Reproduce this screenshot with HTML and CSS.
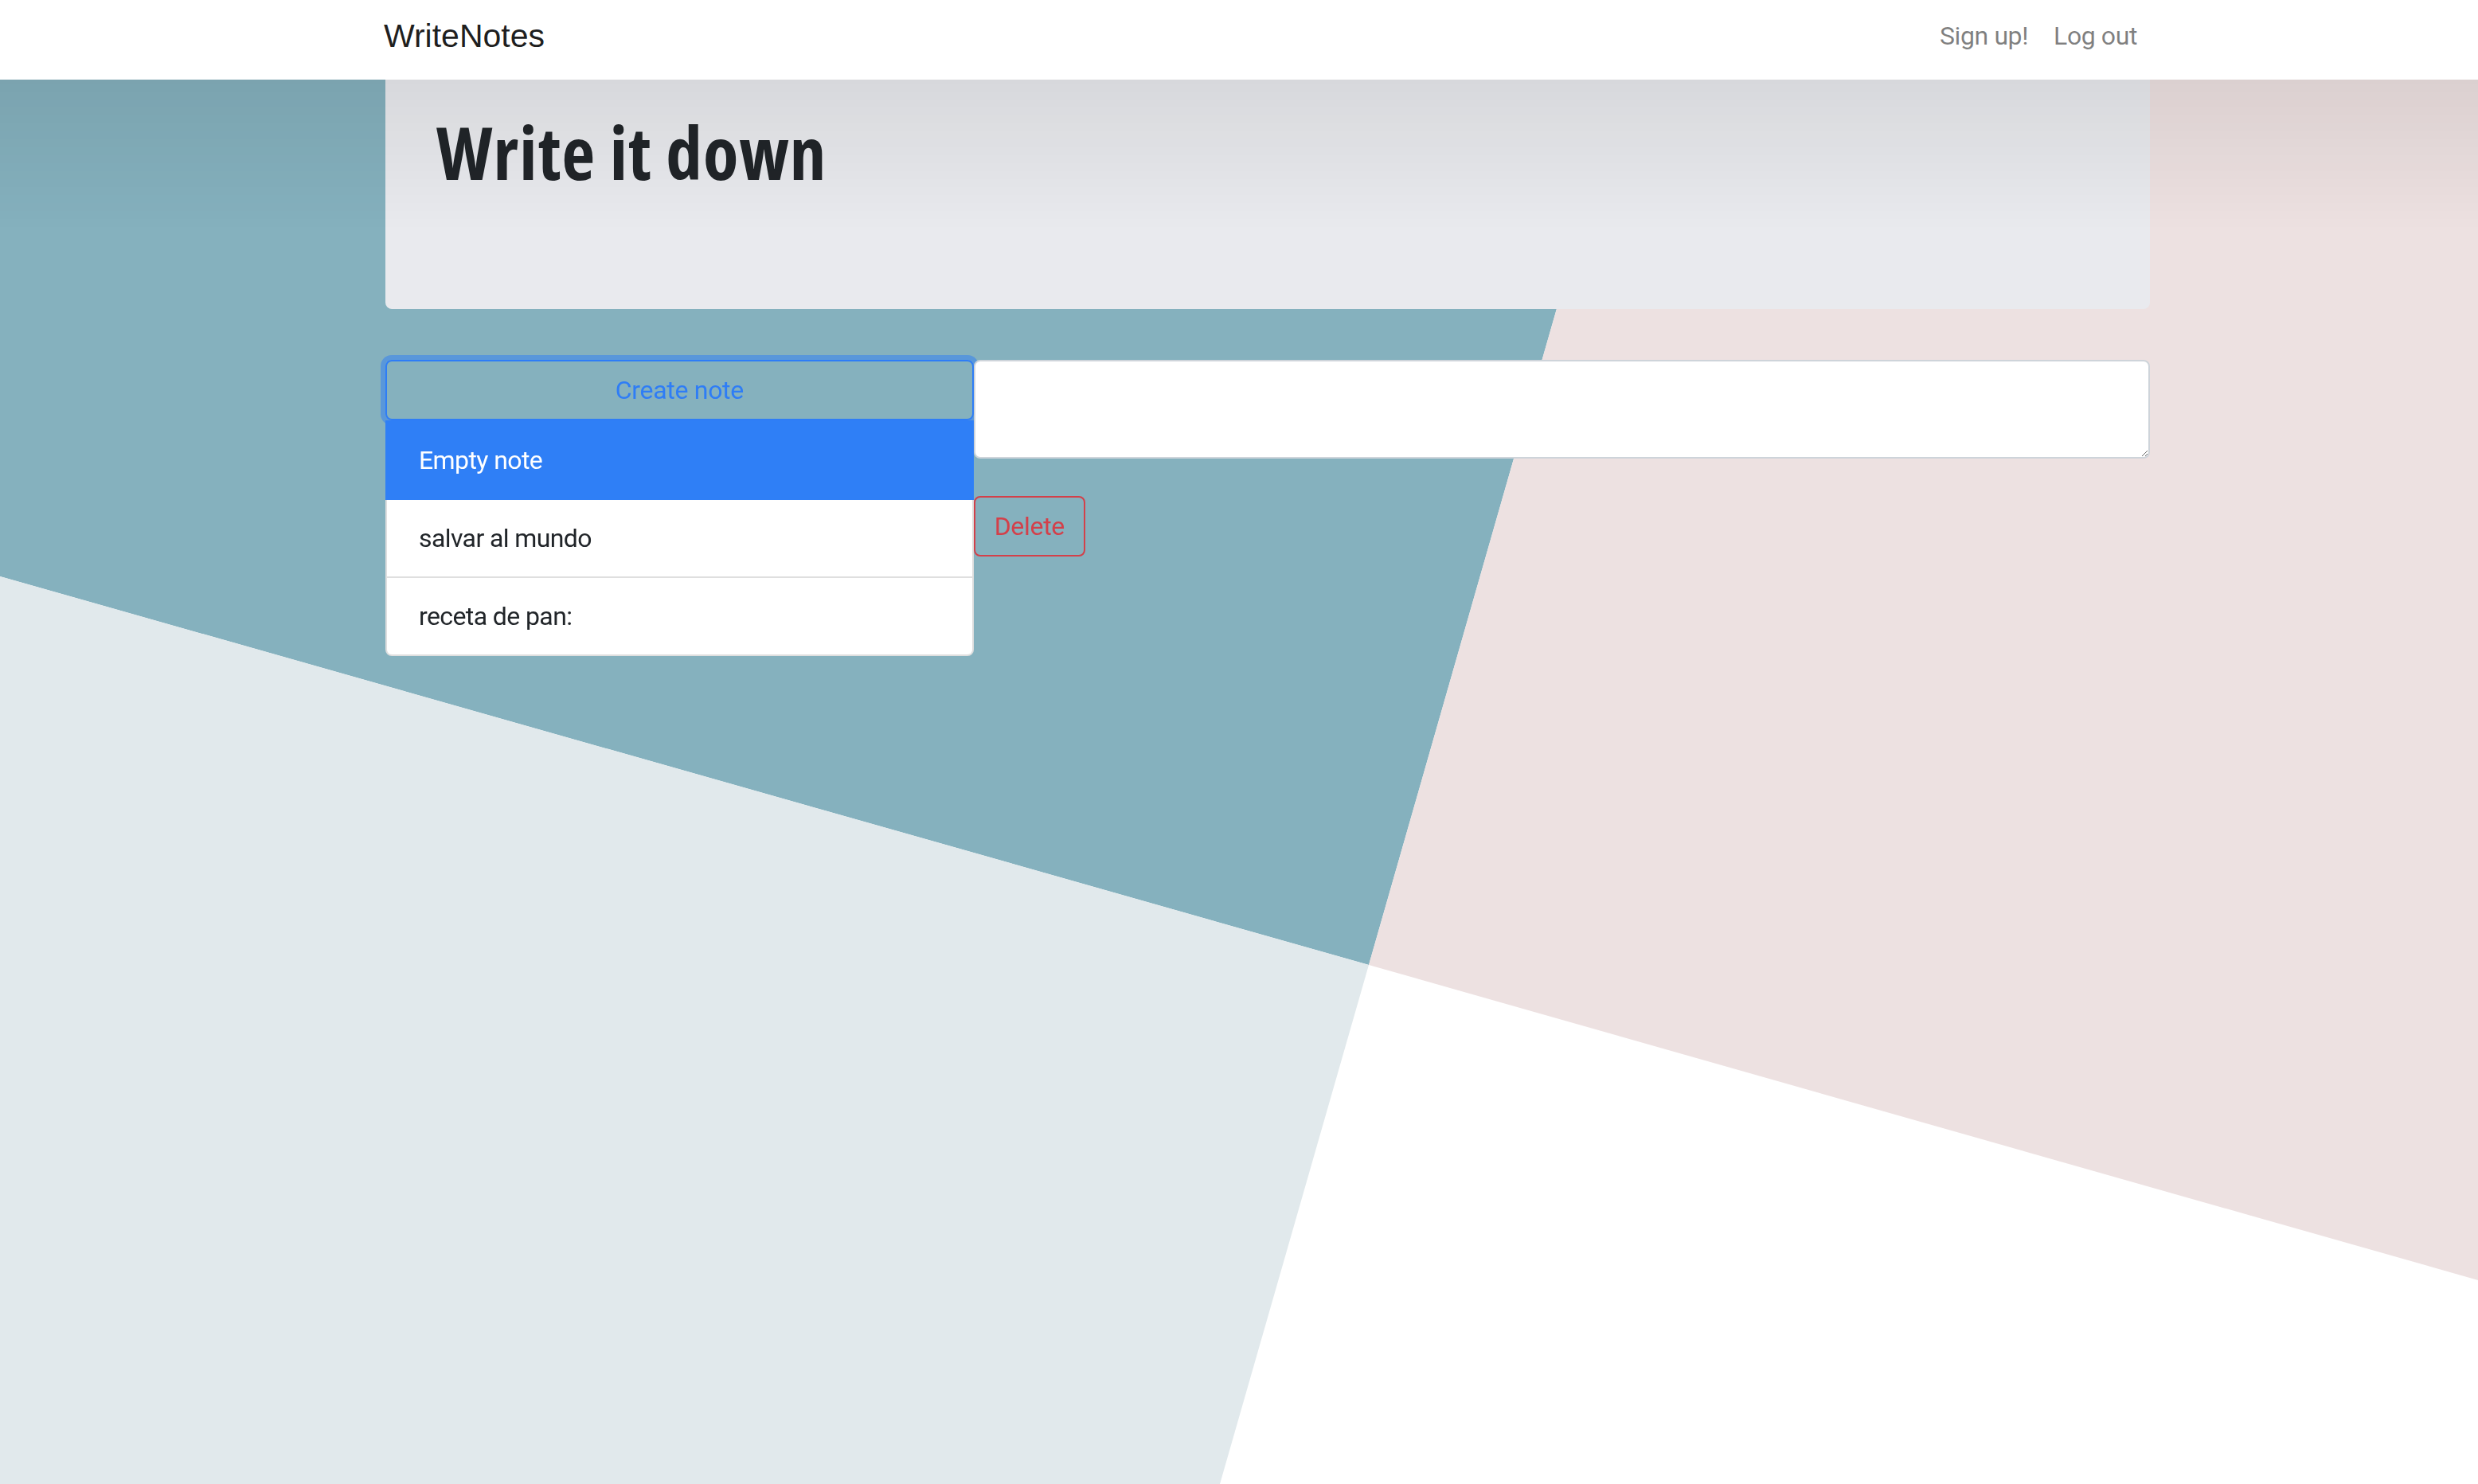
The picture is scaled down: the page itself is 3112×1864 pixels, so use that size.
FILE: index.html
```html
<!DOCTYPE html>
<html lang="en">
<head>
<meta charset="utf-8">
<title>WriteNotes</title>
<link rel="stylesheet" href="styles.css">
</head>
<body>
<svg class="bg" viewBox="0 0 3112 1864" preserveAspectRatio="none" aria-hidden="true">
  <rect width="3112" height="1864" fill="#ffffff"/>
  <polygon points="0,0 2066,0 1719,1212 0,724" fill="#85b1be"/>
  <polygon points="2066,0 3112,0 3112,1608 1719,1212" fill="#ede1e1"/>
  <polygon points="0,724 1719,1212 1532,1864 0,1864" fill="#e1e9ec"/>
</svg>
<header class="navbar">
  <div class="container nav-inner">
    <a class="brand" href="#">WriteNotes</a>
    <nav class="nav-links">
      <a class="nav-link" href="#">Sign up!</a>
      <a class="nav-link" href="#">Log out</a>
    </nav>
  </div>
</header>
<main class="container page">
  <section class="jumbotron">
    <h1 class="title">Write it down</h1>
  </section>
  <div class="notes-row">
    <div class="notes-col">
      <button class="btn btn-primary-outline btn-block focused">Create note</button>
      <ul class="list-group">
        <li class="list-item active">Empty note</li>
        <li class="list-item">salvar al mundo</li>
        <li class="list-item">receta de pan:</li>
      </ul>
    </div>
    <div class="editor-col">
      <textarea class="note-text" rows="2"></textarea>
      <button class="btn btn-danger-outline">Delete</button>
    </div>
  </div>
</main>
</body>
</html>
```
FILE: styles.css
```css
* { box-sizing: border-box; }

html, body {
  margin: 0;
  padding: 0;
}

body {
  font-family: Roboto, "Liberation Sans", sans-serif;
  font-size: 32px;
  line-height: 48px;
  letter-spacing: -0.4px;
  color: #212529;
  min-height: 1864px;
}

.bg {
  position: fixed;
  top: 0;
  left: 0;
  width: 100%;
  height: 100%;
  z-index: 0;
}

.container {
  width: 2216px;
  margin-left: 484px;
}

.navbar {
  position: relative;
  z-index: 2;
  height: 100px;
  background: #ffffff;
}

.navbar::after {
  content: "";
  position: absolute;
  left: 0;
  right: 0;
  top: 100%;
  height: 190px;
  background: linear-gradient(rgba(0, 0, 0, 0.075), rgba(0, 0, 0, 0));
  pointer-events: none;
}

.nav-inner {
  height: 100%;
  display: flex;
  align-items: center;
  justify-content: space-between;
}

.brand {
  font-family: "Liberation Sans", Arial, sans-serif;
  font-size: 41px;
  line-height: 60px;
  letter-spacing: 0;
  color: rgba(0, 0, 0, 0.9);
  text-decoration: none;
  margin-left: -2px;
  margin-top: -10px;
}

.nav-links {
  display: flex;
  margin-top: -10px;
}

.nav-link {
  padding: 0 16px;
  font-size: 32px;
  line-height: 48px;
  letter-spacing: -0.4px;
  color: rgba(0, 0, 0, 0.5);
  text-decoration: none;
}

.page {
  position: relative;
  z-index: 1;
}

.jumbotron {
  height: 288px;
  background: #e9eaee;
  border-radius: 0 0 8px 8px;
  padding: 31px 64px 0;
}

.title {
  margin: 0;
  font-family: "Open Sans", "DejaVu Sans", sans-serif;
  font-weight: 700;
  font-stretch: 75%;
  font-size: 91px;
  line-height: 120px;
  letter-spacing: 1.1px;
  color: #212529;
}

.notes-row {
  margin-top: 64px;
  display: grid;
  grid-template-columns: 1fr 2fr;
}

.btn {
  font-family: Roboto, "Liberation Sans", sans-serif;
  font-size: 32px;
  line-height: 48px;
  letter-spacing: -0.3px;
  padding: 12px 24px;
  border-radius: 8px;
  background: transparent;
  cursor: pointer;
  display: inline-block;
}

.btn-block {
  display: block;
  width: 100%;
}

.btn-primary-outline {
  border: 2px solid #2e7df6;
  color: #2e7df6;
}

.focused {
  box-shadow: 0 0 0 6px rgba(46, 125, 246, 0.5);
}

.btn-danger-outline {
  border: 2px solid #d3404a;
  color: #d3404a;
}

.list-group {
  list-style: none;
  margin: 0;
  padding: 0;
  position: relative;
}

.list-item {
  background: #ffffff;
  border: 2px solid rgba(0, 0, 0, 0.125);
  border-top-width: 0;
  padding: 24px 40px;
  font-size: 32px;
  line-height: 48px;
  letter-spacing: -0.6px;
  color: #212529;
}

.list-item:first-child {
  border-top-width: 2px;
}

.list-item:last-child {
  border-radius: 0 0 8px 8px;
}

.list-item.active {
  background: #2f7ff6;
  border-color: #2f7ff6;
  color: #ffffff;
}

.note-text {
  display: block;
  width: 100%;
  height: 124px;
  margin: 0 0 47px;
  padding: 12px 24px;
  font-family: Roboto, sans-serif;
  font-size: 32px;
  line-height: 48px;
  border: 2px solid #ced4da;
  border-radius: 8px;
  background: #ffffff;
  color: #495057;
}
```
